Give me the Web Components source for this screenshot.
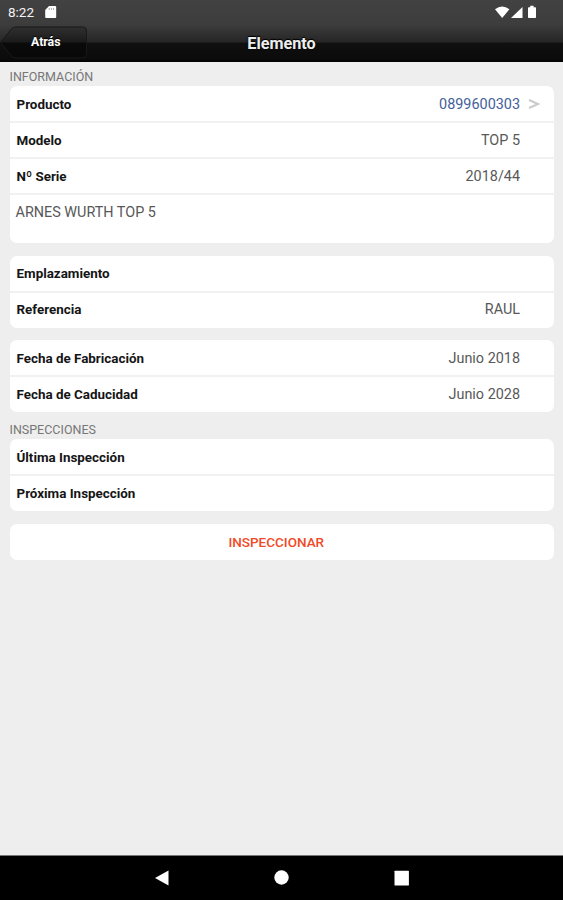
<!DOCTYPE html>
<html lang="es">
<head>
<meta charset="utf-8">
<title>Elemento</title>
<style>
  body {
    margin: 0;
    background: #eeeeee;
    font-family: Roboto, "Liberation Sans", sans-serif;
  }
</style>
</head>
<body>
<app-screen>
  <status-bar slot="top" time="8:22"></status-bar>
  <nav-header slot="top" back="Atrás">Elemento</nav-header>

  <section-title>INFORMACIÓN</section-title>
  <card-group>
    <info-row label="Producto" link>0899600303</info-row>
    <info-row label="Modelo">TOP 5</info-row>
    <info-row label="Nº Serie">2018/44</info-row>
    <note-row>ARNES WURTH TOP 5</note-row>
  </card-group>
  <card-group spaced>
    <info-row label="Emplazamiento"></info-row>
    <info-row label="Referencia">RAUL</info-row>
  </card-group>
  <card-group spaced>
    <info-row label="Fecha de Fabricación">Junio 2018</info-row>
    <info-row label="Fecha de Caducidad">Junio 2028</info-row>
  </card-group>

  <section-title style="--height: 27px; --top: 4px">INSPECCIONES</section-title>
  <card-group>
    <info-row label="Última Inspección"></info-row>
    <info-row label="Próxima Inspección"></info-row>
  </card-group>
  <action-button>INSPECCIONAR</action-button>

  <system-nav slot="bottom"></system-nav>
</app-screen>

<script>
class BaseElement extends HTMLElement {
    constructor() {
        super();
        this.attachShadow({ mode: 'open' });
        this.shadowRoot.innerHTML = this.constructor.html;
    }
}

class AppScreen extends BaseElement {
    static html = `
<style>
  :host {
    display: flex;
    flex-direction: column;
    height: 900px;
    overflow: hidden;
  }
  .top {
    height: 62px;
    flex: none;
    background: linear-gradient(#424242 0, #3d3d3d 24px, #262626 42px, #101010 43px, #0b0b0b 59px, #000 62px);
  }
  main {
    flex: 1;
    padding: 0 9px 0 9.5px;
  }
</style>
<div class="top"><slot name="top"></slot></div>
<main><slot></slot></main>
<slot name="bottom"></slot>
`;
}

class StatusBar extends BaseElement {
    static html = `
<style>
  :host {
    display: flex;
    align-items: center;
    height: 24px;
    padding: 0 25px 0 8px;
    color: #f4f4f4;
    font-size: 13.5px;
  }
  svg {
    display: block;
    fill: #fff;
  }
  .card {
    margin-left: 11px;
    margin-right: auto;
  }
</style>
<span id="time"></span>
<svg class="card" width="12" height="14" viewBox="0 0 12 14"><path d="M4 1h6.200q1 0 1 1v10q0 1-1 1h-9q-1 0-1-1V5z"/><path d="M4.200 3v2M6.400 3v2M8.600 3v2" stroke="#999" stroke-width=".8"/></svg>
<svg width="43" height="16" viewBox="0 0 43 16">
  <path d="M0 5.200Q7.200-.4 14.400 5.200L7.200 14z"/>
  <path d="M27.500 3v11H16z"/>
  <path d="M35.200 1.800h3.400v1.500h1.800q.6 0 .6.700v9.300q0 .7-.7.700h-6.600q-.7 0-.7-.7V4q0-.7.600-.7h1.600z"/>
</svg>
`;
    connectedCallback() {
        this.shadowRoot.querySelector('#time').innerText = this.getAttribute('time');
    }
}

class NavHeader extends BaseElement {
    static html = `
<style>
  :host {
    display: grid;
    grid-template-columns: 87px 1fr 87px;
    height: 38px;
    color: #eee;
  }
  .back {
    display: grid;
    width: 87px;
    height: 34px;
    margin-top: 2px;
  }
  .back svg, .back span {
    grid-area: 1 / 1;
  }
  .back span {
    align-self: center;
    padding: 0 0 3px 31px;
    font-size: 12.3px;
    font-weight: 700;
    color: #fff;
    text-shadow: 0 -1px 1px #000;
  }
  h1 {
    margin: 0;
    padding-top: 1px;
    text-align: center;
    font-size: 16.2px;
    line-height: 37px;
    font-weight: 700;
    text-shadow: 0 0 2px #000, 0 -1px 1px #000;
  }
</style>
<div class="back">
  <svg width="87" height="34" viewBox="0 0 87 34">
    <defs>
      <linearGradient id="g" x1="0" y1="0" x2="0" y2="1">
        <stop offset="0" stop-color="#303030"/>
        <stop offset=".48" stop-color="#1b1b1b"/>
        <stop offset=".52" stop-color="#0a0a0a"/>
        <stop offset="1" stop-color="#080808"/>
      </linearGradient>
    </defs>
    <path d="M.5 16.500L11 3.500Q13 1 16 1H82.500Q86.500 1 86.500 5V28Q86.500 32 82.500 32H16Q13 32 11 29.500Z" fill="url(#g)" stroke="#191919"/>
  </svg>
  <span></span>
</div>
<h1><slot></slot></h1>
`;
    connectedCallback() {
        this.shadowRoot.querySelector('.back span').innerText = this.getAttribute('back');
    }
}

class SectionTitle extends BaseElement {
    static html = `
<style>
  :host {
    display: block;
    box-sizing: border-box;
    height: var(--height, 24px);
    padding-top: var(--top, 1px);
    font-size: 12.5px;
    line-height: 27px;
    color: #777;
  }
</style>
<slot></slot>
`;
}

class CardGroup extends BaseElement {
    static html = `
<style>
  :host {
    display: block;
    background: #fff;
    border-radius: 7px;
  }
  :host([spaced]) {
    margin-top: 12.5px;
  }
  ::slotted(:not(:last-child)) {
    box-shadow: 0 1px #f1f1f1, inset 0 -1px #f1f1f1;
  }
</style>
<slot></slot>
`;
}

class InfoRow extends BaseElement {
    static html = `
<style>
  :host {
    display: flex;
    align-items: center;
    justify-content: space-between;
    box-sizing: border-box;
    height: 36px;
    padding: 0 34px 0 7px;
    font-size: 14.4px;
    color: #585858;
  }
  b {
    font-size: 13.4px;
    font-weight: 700;
    color: #151515;
  }
  :host([link]) {
    padding-right: 14px;
    color: #44609b;
  }
  svg {
    display: none;
    margin-left: 8px;
  }
  :host([link]) svg {
    display: block;
  }
  .value {
    display: flex;
    align-items: center;
  }
</style>
<b></b>
<div class="value">
  <slot></slot>
  <svg width="12" height="12" viewBox="0 0 12 12"><path d="M1 2l9 4-9 4" fill="none" stroke="#cacaca" stroke-width="2"/></svg>
</div>
`;
    connectedCallback() {
        this.shadowRoot.querySelector('b').innerText = this.getAttribute('label');
    }
}

class NoteRow extends BaseElement {
    static html = `
<style>
  :host {
    display: block;
    box-sizing: border-box;
    height: 49px;
    padding: 10px 6px;
    font-size: 14.4px;
    line-height: 17px;
    color: #585858;
  }
</style>
<slot></slot>
`;
}

class ActionButton extends BaseElement {
    static html = `
<style>
  :host {
    display: block;
    box-sizing: border-box;
    height: 36px;
    margin-top: 13px;
    padding-right: 11px;
    background: #fff;
    border-radius: 7px;
    text-align: center;
    font-size: 13.5px;
    font-weight: 500;
    line-height: 37px;
    color: #f04a28;
  }
</style>
<slot></slot>
`;
}

class SystemNav extends BaseElement {
    static html = `
<style>
  :host {
    display: flex;
    flex: none;
    align-items: center;
    justify-content: center;
    gap: 104px;
    box-sizing: border-box;
    height: 45px;
    border-top: 1px solid #777;
    background: #000;
  }
  svg {
    display: block;
    fill: #fff;
  }
</style>
<svg width="16" height="16" viewBox="0 0 16 16"><path d="M1 8L14.500 .5v15z"/></svg>
<svg width="16" height="16" viewBox="0 0 16 16"><circle cx="7.500" cy="7.500" r="7.200"/></svg>
<svg width="16" height="16" viewBox="0 0 16 16"><rect x=".5" y=".8" width="14.400" height="14.800" rx=".5"/></svg>
`;
}

customElements.define('app-screen', AppScreen);
customElements.define('status-bar', StatusBar);
customElements.define('nav-header', NavHeader);
customElements.define('section-title', SectionTitle);
customElements.define('card-group', CardGroup);
customElements.define('info-row', InfoRow);
customElements.define('note-row', NoteRow);
customElements.define('action-button', ActionButton);
customElements.define('system-nav', SystemNav);
</script>
</body>
</html>
